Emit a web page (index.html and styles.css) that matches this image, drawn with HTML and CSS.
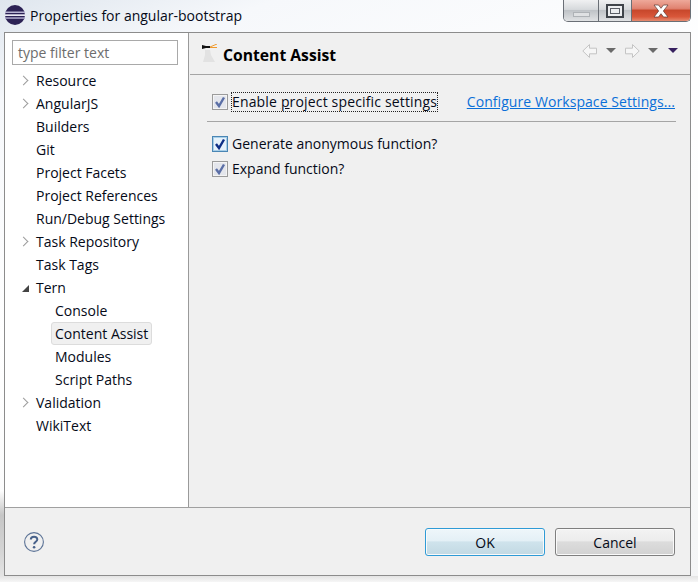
FILE: index.html
```html
<!DOCTYPE html>
<html lang="en">
<head>
<meta charset="utf-8">
<title>Properties for angular-bootstrap</title>
<link rel="stylesheet" href="styles.css">
</head>
<body>
<svg class="defs" width="0" height="0" aria-hidden="true">
  <symbol id="tick" viewBox="0 0 16 16"><path d="M4 8 L7 12 L12 3.500" fill="none" stroke-width="2.400"/></symbol>
  <symbol id="arrow" viewBox="0 0 15 14"><path d="M7.5 .5 L.8 7 L7.5 13.500 V9.800 H14.500 V4.200 H7.500 Z"/></symbol>
</svg>
<header class="titlebar">
  <svg class="app-icon" viewBox="0 0 20 20" width="20" height="20">
    <circle cx="10" cy="10" r="10" fill="#2c2255"/>
    <rect x="0" y="6.500" width="20" height="1.500" fill="#b9b5d4"/>
    <rect x="0" y="9.300" width="20" height="1.700" fill="#eceaf5"/>
    <rect x="0" y="12.300" width="20" height="1.500" fill="#b0abcd"/>
  </svg>
  <span class="window-title">Properties for angular-bootstrap</span>
  <div class="controls">
    <div class="ctl ctl-min"><i></i></div>
    <div class="ctl ctl-max"><i></i></div>
    <div class="ctl ctl-close">
      <svg viewBox="0 0 16 14" width="16" height="14"><path d="M1 1 H5.500 L8 4.300 L10.500 1 H15 L10.300 7 L15 13 H10.500 L8 9.700 L5.500 13 H1 L5.700 7 Z" fill="#fff" stroke="#5a3a34" stroke-width=".7"/></svg>
    </div>
  </div>
</header>
<main class="frame">
  <div class="panes">
    <aside class="sidebar">
      <div class="filter">type filter text</div>
      <ul class="tree">
        <li class="row"><span class="tw closed"></span>Resource</li>
        <li class="row"><span class="tw closed"></span>AngularJS</li>
        <li class="row"><span class="tw"></span>Builders</li>
        <li class="row"><span class="tw"></span>Git</li>
        <li class="row"><span class="tw"></span>Project Facets</li>
        <li class="row"><span class="tw"></span>Project References</li>
        <li class="row"><span class="tw"></span>Run/Debug Settings</li>
        <li class="row"><span class="tw closed"></span>Task Repository</li>
        <li class="row"><span class="tw"></span>Task Tags</li>
        <li class="row"><span class="tw open"></span>Tern</li>
        <li class="row child"><span class="label">Console</span></li>
        <li class="row child"><span class="label selected">Content Assist</span></li>
        <li class="row child"><span class="label">Modules</span></li>
        <li class="row child"><span class="label">Script Paths</span></li>
        <li class="row"><span class="tw closed"></span>Validation</li>
        <li class="row"><span class="tw"></span>WikiText</li>
      </ul>
    </aside>
    <section class="content">
      <div class="page-head">
        <svg class="page-icon" viewBox="0 0 16 18" width="16" height="18">
          <path d="M3 6 L8 6 L9 11 L13 18 H1 L3 11 Z" fill="#e2e2e2"/>
          <path d="M0 1 L4 2 H8 V4 H4 L0 5 Z" fill="#111"/>
          <path d="M8 3 L15 0 M8 3.500 H15" stroke="#ef9a2e" fill="none"/>
        </svg>
        <h1 class="page-title">Content Assist</h1>
        <div class="nav">
          <svg class="nav-arrow" width="15" height="14"><use href="#arrow"/></svg>
          <span class="tri"></span>
          <svg class="nav-arrow flip" width="15" height="14"><use href="#arrow"/></svg>
          <span class="tri tri-next"></span>
          <span class="tri menu"></span>
        </div>
      </div>
      <div class="body">
        <div class="project-row">
          <span class="check"><svg width="16" height="16"><use href="#tick"/></svg></span>
          <span class="focus">Enable <u>p</u>roject specific settings</span>
          <span class="link">Configure Workspace Settings...</span>
        </div>
        <hr class="sep">
        <div class="option first"><span class="check active"><svg width="16" height="16"><use href="#tick"/></svg></span><span>Generate anonymous function?</span></div>
        <div class="option"><span class="check"><svg width="16" height="16"><use href="#tick"/></svg></span><span>Expand function?</span></div>
      </div>
    </section>
  </div>
  <footer class="buttonbar">
    <svg class="help" viewBox="0 0 20 20" width="20" height="20">
      <circle cx="10" cy="10" r="9.400" fill="none" stroke="#5c7396" stroke-width="1.100"/>
      <path d="M6.800 7.600 C6.800 3.800 13.300 3.800 13.300 7.500 C13.300 9.800 10.100 9.800 10.100 12.300" fill="none" stroke="#47618a" stroke-width="2"/>
      <circle cx="10.100" cy="15.200" r="1.300" fill="#47618a"/>
    </svg>
    <button class="btn default">OK</button>
    <button class="btn">Cancel</button>
  </footer>
</main>
</body>
</html>
```
FILE: styles.css
```css
* { box-sizing: border-box; }
html, body { margin: 0; height: 582px; overflow: hidden; }
body {
  position: relative;
  background:
    linear-gradient(#ffffff 0, #c6c6c6 25px, #d4d4d4 60px, #e4e4e4 100%) 0 490px / 4px 86px no-repeat,
    linear-gradient(#e4e4e4, #f6f6f6) 0 576px / 100% 6px no-repeat,
    linear-gradient(160deg, #dfe6ee 0, #f6f8fb 12%, #fff 40%, #f4f5f6 100%);
  font-family: "Open Sans", "Noto Sans", sans-serif;
  font-size: 14px;
  color: #050a18;
}
.defs { position: absolute; }
.titlebar { height: 32px; display: flex; align-items: flex-start; padding-left: 5px; }
.app-icon { margin-top: 5px; flex: none; }
.window-title { margin: 5px 0 0 5px; line-height: 22px; font-size: 14px; }
.controls {
  margin-left: auto; margin-right: 7px; width: 128px; height: 22px; display: flex;
  border: 1px solid #6a6f76; border-top: 0; border-radius: 0 0 5px 5px; overflow: hidden;
}
.ctl { display: flex; align-items: center; justify-content: center; background: linear-gradient(#f0f1f2 0, #d6d9dc 45%, #bfc3c7 50%, #e0e2e4 100%); }
.ctl-min { width: 35px; border-right: 1px solid #6a6f76; }
.ctl-min i { width: 17px; height: 5px; margin-top: 7px; border: 1px solid #aeb2b6; background: #dfe1e3; }
.ctl-max { width: 33px; border-right: 1px solid #6a6f76; }
.ctl-max i { width: 18px; height: 14px; border: 2px solid #3f444a; background: #eceef0; box-shadow: inset 0 0 0 2px #eceef0, inset 0 0 0 3px #5a5f66; }
.ctl-close { flex: 1; background: linear-gradient(#eea99a 0, #e08371 40%, #c8482c 50%, #d9573a 80%, #e58b70 100%); }
.frame {
  margin-left: 4px; width: 687px; height: 544px; display: flex; flex-direction: column;
  border: 1px solid #8c8c8c; background: #f0f0f0;
}
.panes { height: 475px; display: flex; border-bottom: 1px solid #a0a0a0; }
.sidebar { width: 184px; flex: none; background: #fff; border-right: 1px solid #9a9a9a; padding: 7px 0 0 7px; }
.filter { width: 166px; height: 25px; border: 1px solid #a9a9a9; color: #6d6d6d; padding-left: 5px; line-height: 24px; }
.tree { list-style: none; margin: 4px 0 0; padding: 0; }
.row { height: 23px; line-height: 23px; display: flex; align-items: center; white-space: nowrap; }
.tw { width: 24px; height: 23px; flex: none; position: relative; }
.tw.closed::before {
  content: ""; position: absolute; left: 8px; top: 8px; width: 6px; height: 6px;
  border-top: 1px solid #9c9c9c; border-right: 1px solid #9c9c9c; transform: rotate(45deg);
}
.tw.open::before {
  content: ""; position: absolute; left: 10px; top: 9px;
  border-style: solid; border-width: 0 0 7px 7px; border-color: transparent transparent #444 transparent;
}
.child { padding-left: 39px; }
.label { padding: 0 3px; height: 23px; line-height: 22px; border: 1px solid transparent; border-radius: 3px; }
.selected { background: #f0f0f0; border-color: #dcdcdc; }
.content { flex: 1; display: flex; flex-direction: column; min-width: 0; }
.page-head { height: 42px; margin-left: 1px; display: flex; align-items: center; padding: 0 12px 0 12px; border-bottom: 1px solid #a5a5a5; }
.page-icon { flex: none; margin-top: -2px; }
.page-title { margin: 2px 0 0 5px; font-size: 15.700px; font-weight: 700; color: #000; }
.nav { margin-left: auto; display: flex; align-items: center; margin-top: -6px; }
.nav-arrow { fill: #f6f6f6; stroke: #c4c4c4; stroke-width: 1; overflow: visible; }
.flip { transform: scaleX(-1); margin-left: 9px; }
.tri { margin-left: 9px; border-style: solid; border-width: 5px 5px 0 5px; border-color: #6a6a6a transparent transparent; }
.tri-next { margin-left: 8px; }
.menu { margin-left: 10px; border-top-color: #36205f; }
.body { padding: 17px 15px 0 23px; }
.project-row { display: flex; align-items: center; height: 20px; }
.check {
  width: 16px; height: 16px; flex: none; border: 1px solid #9b9b9b; background: #e4e6ec;
  box-shadow: inset 0 0 0 1px #f4f4f4; stroke: #5b6fa6; display: flex; position: relative;
}
.check svg { position: absolute; left: -1px; top: -1px; }
.check.active { border-color: #4a86b4; background: #e6f2fb; stroke: #0e2f86; box-shadow: inset 0 0 0 1px #a9cfe8; }
.focus { margin-left: 3px; padding: 0 1px; height: 20px; line-height: 19px; outline: 1px dotted #222; outline-offset: -1px; white-space: nowrap; letter-spacing: .16px; }
.link { margin-left: auto; margin-top: -2px; color: #0a6fd8; text-decoration: underline; white-space: nowrap; letter-spacing: .07px; }
.sep { margin: 9px -1px 0 -5px; border: 0; border-top: 1px solid #a5a5a5; }
.option { display: flex; align-items: center; gap: 4px; height: 25px; }
.option.first { margin-top: 9px; }
.buttonbar { flex: 1; display: flex; align-items: center; padding: 0 15px 0 19px; gap: 10px; }
.help { margin-right: auto; }
.btn {
  width: 120px; height: 28px; padding: 2px 0 0; font: inherit; color: #050a18; border: 1px solid #7f7f7f; border-radius: 3px;
  background: linear-gradient(#f3f3f3 0, #ececec 45%, #dcdcdc 50%, #d2d2d2 100%);
  box-shadow: inset 0 0 0 1px #fafafa;
}
.btn.default {
  border-color: #2f9bd6;
  background: linear-gradient(#eef6fa 0, #e4f0f6 45%, #cfe3ec 50%, #c2d9e3 100%);
}
```
